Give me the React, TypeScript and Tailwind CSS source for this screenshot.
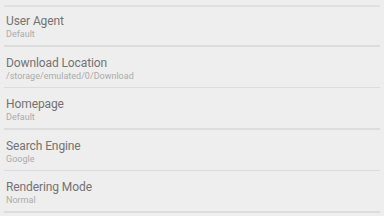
const settings = [
  { title: "User Agent", value: "Default" },
  { title: "Download Location", value: "/storage/emulated/0/Download" },
  { title: "Homepage", value: "Default" },
  { title: "Search Engine", value: "Google" },
  { title: "Rendering Mode", value: "Normal" },
];

export default function App() {
  return (
    <div className="h-[216px] w-[384px] overflow-hidden bg-[#eeeeee] font-['Roboto',sans-serif]">
      <div className="mx-1 mt-[5px] h-[2px] bg-[#e0e0e0]" />
      <ul>
        {settings.map((s, i) => (
          <li key={s.title} className={i === 0 ? "pt-[7px]" : "pt-[9px]"}>
            <div className="px-[6px]">
              <p className="text-[12px] leading-[15px] tracking-[-0.1px] text-[#737373]">{s.title}</p>
              <p className="text-[9px] leading-[10px] text-[#ababab]">{s.value}</p>
            </div>
            <div className="mx-1 mt-[6px] h-[1.5px] bg-[#dcdcdc]" />
          </li>
        ))}
      </ul>
    </div>
  );
}
